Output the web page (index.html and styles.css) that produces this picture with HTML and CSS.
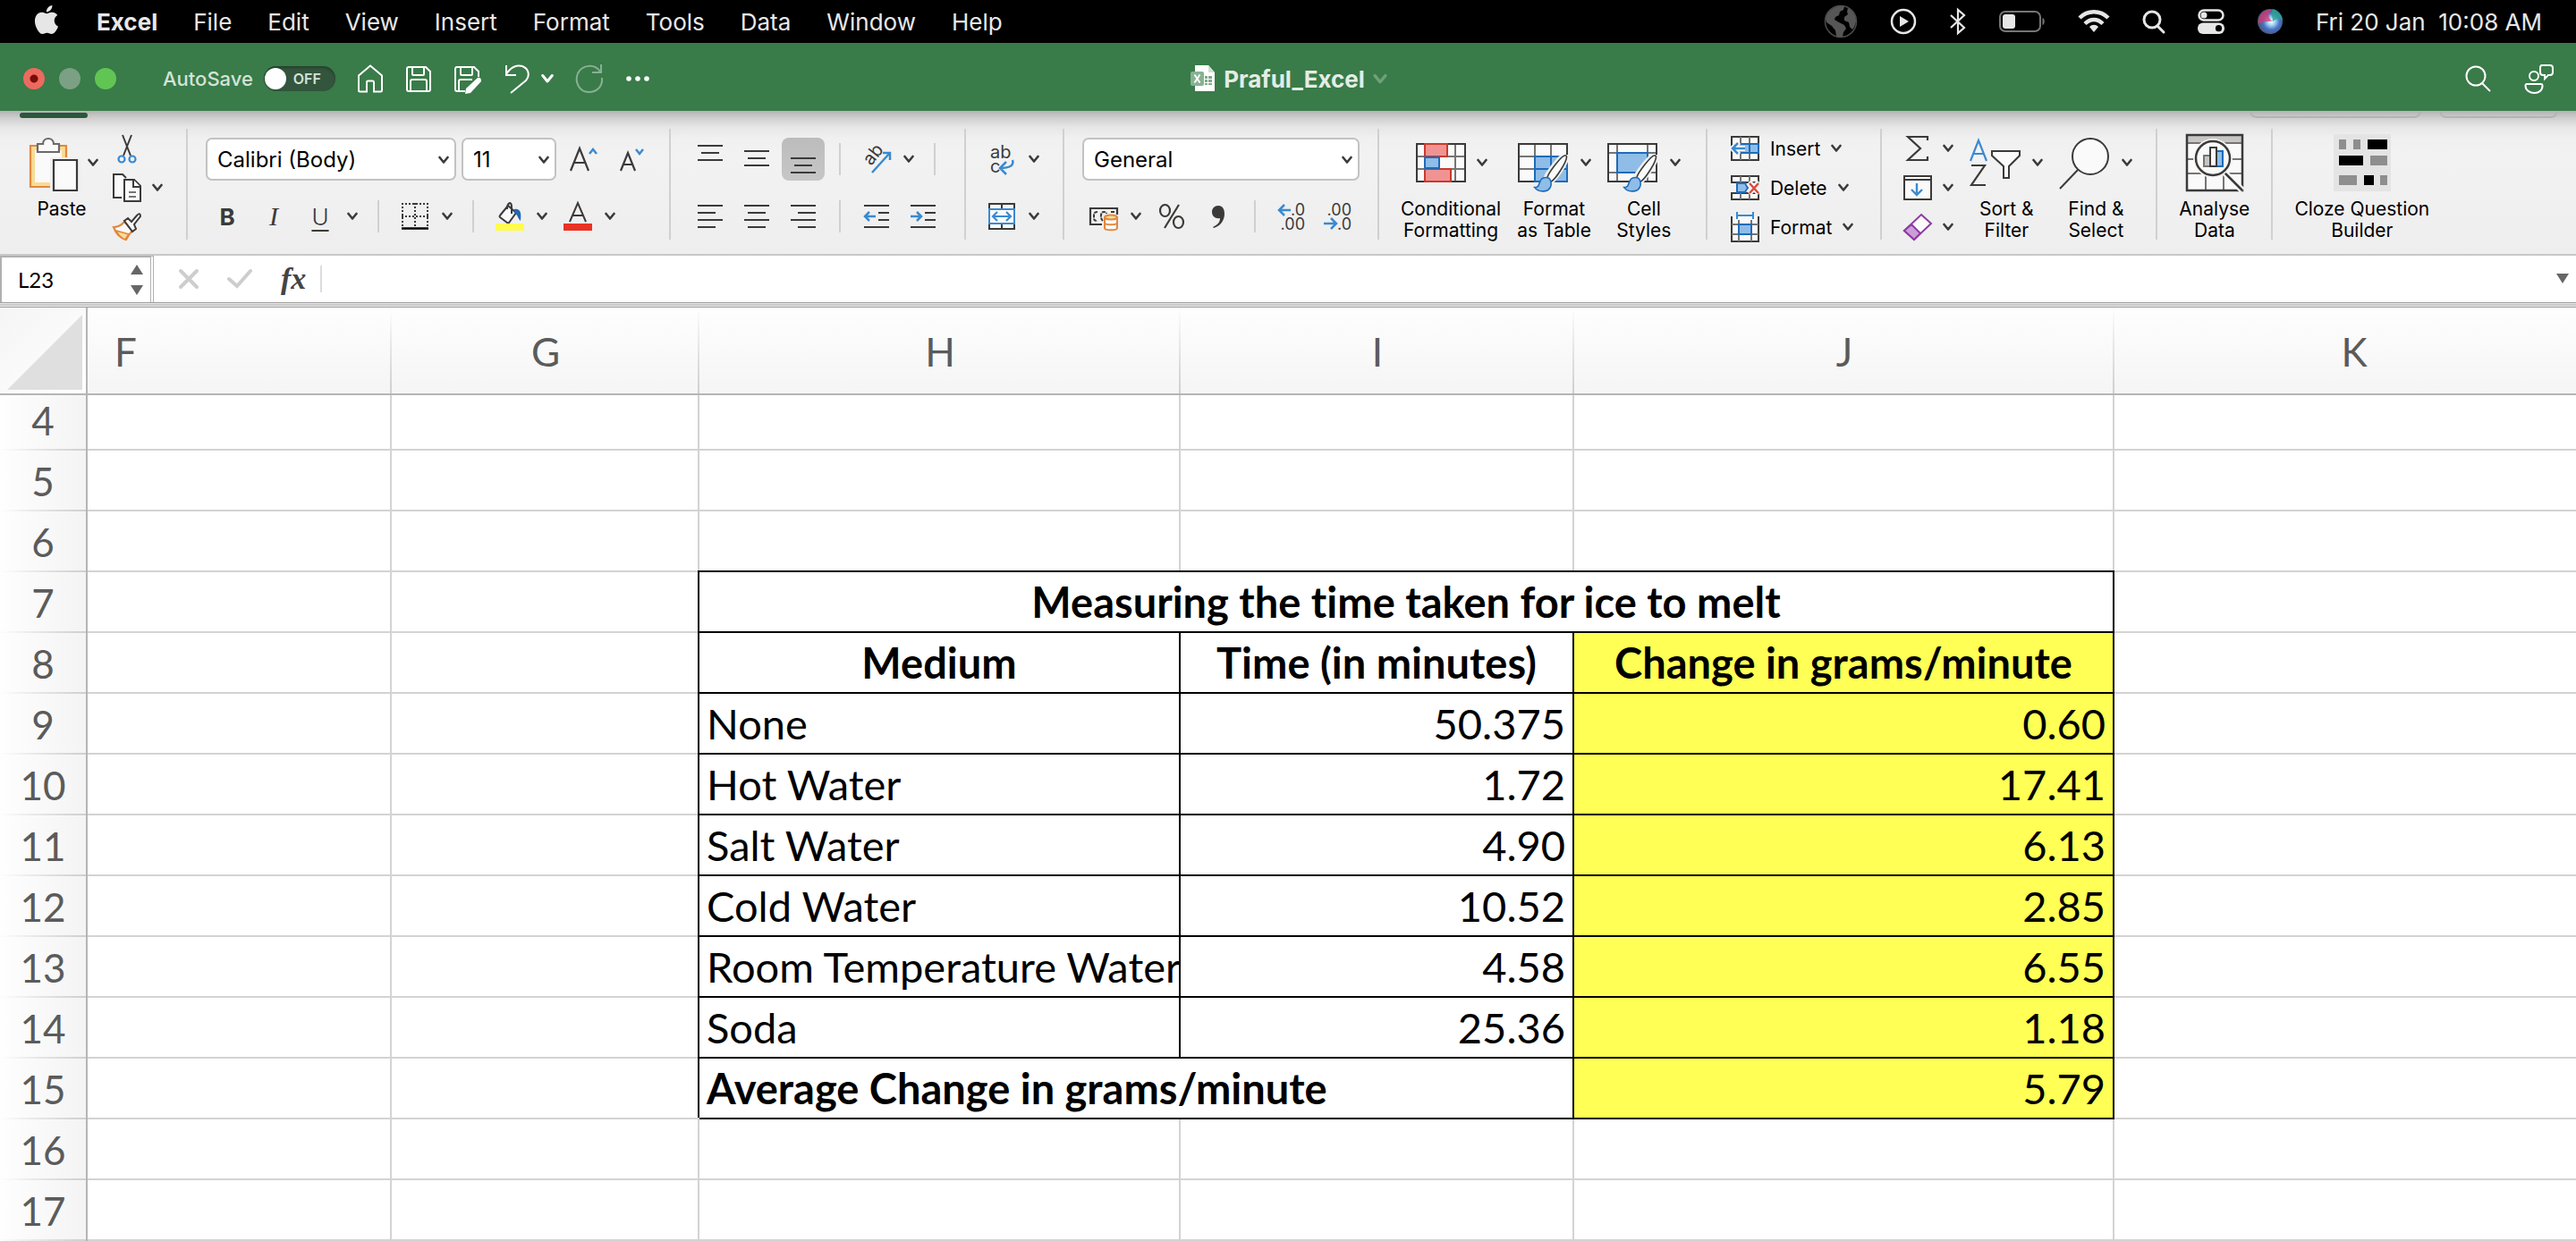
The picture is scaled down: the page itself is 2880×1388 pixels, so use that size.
FILE: index.html
```html
<!DOCTYPE html>
<html lang="en">
<head>
<meta charset="utf-8">
<meta name="viewport" content="width=device-width, initial-scale=1">
<title>Praful_Excel</title>
<link rel="stylesheet" href="styles.css">
</head>
<body>
<svg class="sprite" aria-hidden="true">
  <symbol id="chev" viewBox="0 0 12 10"><path d="M1.500 2 6 7.500 10.500 2" fill="none" stroke="currentColor" stroke-width="2.600" stroke-linecap="round" stroke-linejoin="round"/></symbol>
  <symbol id="brush" viewBox="0 0 48 54">
    <path d="M43 1C38 1 18 28 17 33l6 6C30 34 46 10 46 4c0-2-1-3-3-3z" fill="#fafafa" stroke="#f0f0f0" stroke-width="7"/>
    <path d="M44 1C39 1 20 26 19 32l5 6C31 34 46 10 46 3c0-1-1-2-2-2z" fill="#fafafa" stroke="#3b3a39" stroke-width="2"/>
    <path d="M17 32c-8 0-8 6-10 10-1 3-4 4-6 4 3 4 9 6 15 5 7-1 9-8 8-13-1-4-4-6-7-6z" fill="#8fbde8" stroke="#1e6bb8" stroke-width="2"/>
  </symbol>
</svg>

<header class="menubar">
  <nav class="menus" aria-label="Application menu">
    <a class="menu apple" href="#" aria-label="Apple menu"><svg width="32" height="32" viewBox="0 0 24 24" fill="#e6e6e6"><path d="M12.152 6.896c-.948 0-2.415-1.078-3.960-1.040-2.040.027-3.910 1.183-4.961 3.014-2.117 3.675-.546 9.103 1.519 12.090 1.013 1.454 2.208 3.090 3.792 3.039 1.520-.065 2.090-.987 3.935-.987 1.831 0 2.350.987 3.960.948 1.637-.026 2.676-1.480 3.676-2.948 1.156-1.688 1.636-3.325 1.662-3.415-.039-.013-3.182-1.221-3.220-4.857-.026-3.040 2.480-4.494 2.597-4.559-1.429-2.090-3.623-2.324-4.390-2.376-2-.156-3.675 1.090-4.610 1.090zM15.530 3.830c.843-1.012 1.400-2.427 1.245-3.830-1.207.052-2.662.805-3.532 1.818-.780.896-1.454 2.338-1.273 3.714 1.338.104 2.715-.688 3.559-1.701"/></svg></a>
    <a class="menu app" href="#">Excel</a>
    <a class="menu" href="#">File</a>
    <a class="menu" href="#">Edit</a>
    <a class="menu" href="#">View</a>
    <a class="menu" href="#">Insert</a>
    <a class="menu" href="#">Format</a>
    <a class="menu" href="#">Tools</a>
    <a class="menu" href="#">Data</a>
    <a class="menu" href="#">Window</a>
    <a class="menu" href="#">Help</a>
  </nav>
  <div class="status">
    <svg width="38" height="38" viewBox="0 0 38 38"><circle cx="19" cy="19" r="17.500" fill="#000" stroke="#4a4a4a" stroke-width="1.500"/><path d="M7 7c5-5 11-6 16-5l-1 4-4 2-1 4-4 2-1 3 5 3 6 3 2 4-3 4-1 5c-4 1-6 0-7-1l-1-6-4-5-6-4-1-4c1-4 2-6 5-9zM27 4c6 3 9 9 9 15-1 4-2 7-4 9l-3-3-1-5-5-2 0-4 4-3-1-3z" fill="#565656"/></svg>
    <svg width="30" height="30" viewBox="0 0 30 30"><circle cx="15" cy="15" r="13" fill="none" stroke="#e6e6e6" stroke-width="2.500"/><path d="M11 9v12l10-6z" fill="#e6e6e6"/></svg>
    <svg width="20" height="30" viewBox="0 0 20 30" fill="none" stroke="#e6e6e6" stroke-width="2.200"><path d="M2 8l15 14-7 6V2l7 6L2 22"/></svg>
    <svg width="52" height="26" viewBox="0 0 52 26"><rect x="1" y="2" width="45" height="22" rx="6" fill="none" stroke="#767676" stroke-width="2"/><path d="M48.500 9c3 1 3 7 0 8z" fill="#767676"/><rect x="4" y="5" width="14" height="16" rx="3" fill="#e6e6e6"/></svg>
    <svg width="36" height="28" viewBox="0 0 36 28" fill="none" stroke="#e6e6e6" stroke-width="4.500"><path d="M2 10C11 1 25 1 34 10M8 16.500c6-6 14-6 20 0"/><path d="M18 26l-5-6c3-3 7-3 10 0z" fill="#e6e6e6" stroke="none"/></svg>
    <svg width="26" height="28" viewBox="0 0 26 28" fill="none" stroke="#e6e6e6" stroke-width="3"><circle cx="11" cy="12" r="9"/><path d="M17 19l7 7" stroke-linecap="round"/></svg>
    <svg width="30" height="30" viewBox="0 0 30 30"><rect x="1.500" y="2.500" width="27" height="11" rx="5.500" fill="none" stroke="#e6e6e6" stroke-width="2.500"/><circle cx="7" cy="8" r="3.500" fill="#e6e6e6"/><rect x="0" y="16.500" width="30" height="12.500" rx="6" fill="#e6e6e6"/><circle cx="23.500" cy="22.700" r="3.600" fill="#000"/></svg>
    <svg width="30" height="30" viewBox="0 0 30 30"><defs><radialGradient id="siri" cx=".55" cy=".5" r=".55"><stop offset="0" stop-color="#fff"/><stop offset=".25" stop-color="#a9dcf5"/><stop offset=".6" stop-color="#4873c8"/><stop offset="1" stop-color="#49566f"/></radialGradient></defs><circle cx="15" cy="15" r="14" fill="url(#siri)"/><path d="M2 17C2 5 11 1 17 2c-5 3-5 9 1 13-7-1-11 2-16 2z" fill="#d8356e" opacity=".75"/><path d="M18 1c6 1 11 7 11 13-4-3-8-2-11 1 0-5-3-9 0-14z" fill="#2aa392" opacity=".8"/></svg>
    <time class="clock">Fri 20 Jan&nbsp; 10:08 AM</time>
  </div>
</header>

<div class="titlebar">
  <div class="title-left">
    <div class="lights">
      <button class="light close" aria-label="Close"></button>
      <button class="light min" aria-label="Minimise"></button>
      <button class="light max" aria-label="Zoom"></button>
    </div>
    <label class="autosave">AutoSave <span class="switch"><input type="checkbox"><span class="knob"></span><span class="off">OFF</span></span></label>
    <div class="quick">
      <button aria-label="Home"><svg width="30" height="32" viewBox="0 0 30 32"><path d="M2 12.500 15 1.500l13 11V29q0 1.500-1.500 1.500H19V20q0-1.500-1.500-1.500h-5Q11 18.500 11 20v10.500H3.500Q2 30.500 2 29z"/></svg></button>
      <button aria-label="Save"><svg width="30" height="32" viewBox="0 0 30 32"><path d="M4 3h19l5 5v20q0 2-2 2H4q-2 0-2-2V5q0-2 2-2zM8 3v8q0 1 1 1h11q1 0 1-1V3M6 30V19q0-2 2-2h14q2 0 2 2v11"/></svg></button>
      <button aria-label="Save as"><svg width="32" height="32" viewBox="0 0 32 32"><path d="M13 30H4q-2 0-2-2V5q0-2 2-2h19l5 5v6M8 3v8q0 1 1 1h11q1 0 1-1V3M6 30V19q0-2 2-2h13"/><path d="M27 15q4-1 4 4L19 32l-6 1 1-6z" fill="#fff" stroke="none"/></svg></button>
      <span class="undo"><button aria-label="Undo"><svg width="30" height="34" viewBox="0 0 30 34"><path d="M3 2v11h11M3 12C8 4 15 1 21 3c7 3 9 10 4 16L8 33"/></svg></button><button aria-label="Undo history"><svg width="14" height="12"><use href="#chev"/></svg></button></span>
      <button class="dim" aria-label="Redo"><svg width="32" height="34" viewBox="0 0 32 34"><path d="M29 1v9H19M28 9C22 0 8 1 3 11c-4 10 2 21 12 21 9 0 16-6 15-16"/></svg></button>
      <button aria-label="More"><svg width="28" height="8" viewBox="0 0 28 8"><g fill="#fff" stroke="none"><circle cx="4" cy="4" r="2.800"/><circle cx="14" cy="4" r="2.800"/><circle cx="24" cy="4" r="2.800"/></g></svg></button>
    </div>
  </div>
  <div class="doc">
    <svg width="28" height="30" viewBox="0 0 28 30"><path d="M5 0h15l7 8v21H5z" fill="#fff"/><path d="M20 0v8h7z" fill="#cfe0d3"/><g fill="#7fa98a"><path d="M16 12h3v3h-3zM20 12h4v3h-4zM16 16h3v3h-3zM20 16h4v3h-4zM16 20h3v2h-3zM20 20h4v2h-4z"/></g><rect x="0" y="7" width="15" height="16" rx="2" fill="#86b292"/><path d="M4.500 10.500l6 9M10.500 10.500l-6 9" stroke="#fff" stroke-width="2"/></svg>
    <h1>Praful_Excel</h1>
    <svg class="doc-chev" width="16" height="13"><use href="#chev"/></svg>
  </div>
  <div class="title-right">
    <button aria-label="Search"><svg width="30" height="30" viewBox="0 0 30 30"><circle cx="12" cy="12" r="10.500"/><path d="M19 20l9 9"/></svg></button>
    <button aria-label="Share"><svg width="34" height="34" viewBox="0 0 34 34"><circle cx="11" cy="14" r="5"/><path d="M3 23h16q1.500 0 1.500 2c0 5-4 8-9 8s-10-3-10-8q0-2 1.500-2zM20 2h9q3 0 3 3v5q0 3-3 3h-2l-4 4v-4h-2q-3 0-3-3V5q0-3 2-3z"/></svg></button>
  </div>
</div>

<section class="ribbon" aria-label="Home ribbon">
  <div class="tabs"><span class="tab-active"></span><span class="tab-pill wide"></span><span class="tab-pill"></span></div>
  <div class="groups">
    <div class="group clip">
      <button class="big"><span class="pic"><svg width="64" height="64" viewBox="0 0 64 64"><path d="M6 13h40v46H6z" fill="#f8dc95" stroke="#e2883e" stroke-width="2.200"/><path d="M11 18h30v36H11z" fill="#fafafa"/><path d="M14 20v-9h6c0-8 12-8 12 0h6v9z" fill="#fafafa" stroke="#6a6a69" stroke-width="2.200"/><path d="M28 26h35v40H28z" fill="#f0f0f0"/><path d="M32 29h26v34H32z" fill="#fafafa" stroke="#3b3a39" stroke-width="2.200"/></svg><svg class="chev"><use href="#chev"/></svg></span><span>Paste</span></button>
      <div class="stack">
        <button class="mini" aria-label="Cut"><svg width="32" height="32" viewBox="0 0 32 32" fill="none"><path d="M11 1l9 23M21 1l-9 23" stroke="#3b3a39" stroke-width="2"/><circle cx="10" cy="28" r="3.500" stroke="#3a8ad0" stroke-width="2.200"/><circle cx="22" cy="28" r="3.500" stroke="#3a8ad0" stroke-width="2.200"/></svg></button>
        <button class="mini" aria-label="Copy"><svg width="32" height="32" viewBox="0 0 32 32" fill="#fafafa" stroke="#3b3a39" stroke-width="2"><path d="M10 27H1V1h10l4 4" fill="#fafafa"/><path d="M13 7h11l7 7v17H13z"/><path d="M23 7v8h8"/><path d="M18 21h8M18 26h8" stroke="#767573"/></svg><svg class="chev"><use href="#chev"/></svg></button>
        <button class="mini" aria-label="Format painter"><svg width="32" height="32" viewBox="0 0 32 32"><path d="M1 16q7 0 12-6l9 10q-4 4-7 10Q5 27 1 16z" fill="#fafafa" stroke="#e2883e" stroke-width="2.200"/><path d="M4 20l14 4-4 6Q7 27 4 20z" fill="#f8dc95" stroke="#e2883e" stroke-width="1.800"/><path d="M13 9l4-3 4 4 6-7q4-4 4 1l-7 9 2 5-4 3z" fill="#fafafa" stroke="#3b3a39" stroke-width="2"/></svg></button>
      </div>
    </div>

    <div class="group rows font">
      <div class="row top">
        <span class="drop face"><select aria-label="Font"><option>Calibri (Body)</option></select><svg class="chev"><use href="#chev"/></svg></span>
        <span class="drop size"><select aria-label="Font size"><option>11</option></select><svg class="chev"><use href="#chev"/></svg></span>
        <button class="tool" aria-label="Increase font size"><svg width="32" height="32" viewBox="0 0 32 32" fill="none"><path d="M2 29 12 4l10 25M6 20h12" stroke="#3b3a39" stroke-width="2.200"/><path d="M23 10l4-5 4 5" stroke="#3a8ad0" stroke-width="2.500"/></svg></button>
        <button class="tool" aria-label="Decrease font size"><svg width="32" height="32" viewBox="0 0 32 32" fill="none"><path d="M4 29 12 9l8 20M7 22h10" stroke="#3b3a39" stroke-width="2.200"/><path d="M21 5l4 5 4-5" stroke="#3a8ad0" stroke-width="2.500"/></svg></button>
      </div>
      <div class="row">
        <button class="tool bold">B</button>
        <button class="tool ital">I</button>
        <span class="split"><button class="tool under">U</button><button class="caret" aria-label="Underline styles"><svg class="chev"><use href="#chev"/></svg></button></span>
        <span class="sep"></span>
        <span class="split"><button class="tool" aria-label="Borders"><svg width="30" height="30" viewBox="0 0 30 30" fill="none" stroke="#3b3a39" stroke-width="2"><path d="M0 1h30M1 0v26M15 0v26M29 0v26M0 15h30" stroke-dasharray="2 2"/><path d="M0 28.500h30" stroke="#000" stroke-width="2.500"/></svg></button><button class="caret" aria-label="Border styles"><svg class="chev"><use href="#chev"/></svg></button></span>
        <span class="sep"></span>
        <span class="split"><button class="tool" aria-label="Fill colour"><svg width="32" height="34" viewBox="0 0 32 34"><path d="M14 5 5 16q-1 1 0 2l8 6q1 1 2 0l8-11z" fill="#fafafa" stroke="#3b3a39" stroke-width="2"/><path d="M13 9c0-8 5-9 5-3v8" fill="none" stroke="#3b3a39" stroke-width="2"/><path d="M21 9c7-1 8 4 7 13-3-2-3-7-7-9z" fill="#2268b5"/><path d="M0 25h32v8H0z" fill="#fffb4f"/></svg></button><button class="caret" aria-label="Fill colours"><svg class="chev"><use href="#chev"/></svg></button></span>
        <span class="split"><button class="tool" aria-label="Font colour"><svg width="32" height="34" viewBox="0 0 32 34"><path d="M7 23 16 2l9 21M10.500 16h11" fill="none" stroke="#3b3a39" stroke-width="2"/><path d="M0 25h32v8H0z" fill="#ea3323"/></svg></button><button class="caret" aria-label="Font colours"><svg class="chev"><use href="#chev"/></svg></button></span>
      </div>
    </div>

    <div class="group rows align">
      <div class="row top">
        <button class="tool" aria-label="Top align"><svg class="ln" width="28" height="32" viewBox="0 0 28 32"><path d="M0 1h28M4 9h20M0 17h28"/></svg></button>
        <button class="tool" aria-label="Middle align"><svg class="ln" width="28" height="32" viewBox="0 0 28 32"><path d="M0 7h28M4 15h20M0 23h28"/></svg></button>
        <button class="tool on" aria-label="Bottom align"><svg class="ln" width="28" height="32" viewBox="0 0 28 32"><path d="M0 15h28M4 23h20M0 31h28"/></svg></button>
        <span class="sep"></span>
        <span class="split"><button class="tool" aria-label="Orientation"><svg width="36" height="32" viewBox="0 0 36 32"><text x="0" y="0" font-family="Inter" font-size="20" fill="#3b3a39" transform="translate(12 24) rotate(-52)">ab</text><path d="M13 31 32 10M25 9h8v8" fill="none" stroke="#3a8ad0" stroke-width="2.500"/></svg></button><button class="caret" aria-label="Orientations"><svg class="chev"><use href="#chev"/></svg></button></span>
        <span class="sep"></span>
      </div>
      <div class="row">
        <button class="tool" aria-label="Align left"><svg class="ln" width="28" height="28" viewBox="0 0 28 28"><path d="M0 2h28M0 10h20M0 18h28M0 26h20"/></svg></button>
        <button class="tool" aria-label="Centre"><svg class="ln" width="28" height="28" viewBox="0 0 28 28"><path d="M0 2h28M4 10h20M0 18h28M4 26h20"/></svg></button>
        <button class="tool" aria-label="Align right"><svg class="ln" width="28" height="28" viewBox="0 0 28 28"><path d="M0 2h28M8 10h20M0 18h28M8 26h20"/></svg></button>
        <span class="sep"></span>
        <button class="tool" aria-label="Decrease indent"><svg class="ln" width="28" height="28" viewBox="0 0 28 28"><path d="M0 2h28M16 10h12M16 18h12M0 26h28"/><path class="blue" d="M13 14H2M6 9l-5 5 5 5"/></svg></button>
        <button class="tool" aria-label="Increase indent"><svg class="ln" width="28" height="28" viewBox="0 0 28 28"><path d="M0 2h28M16 10h12M16 18h12M0 26h28"/><path class="blue" d="M0 14h11M7 9l5 5-5 5"/></svg></button>
      </div>
    </div>

    <div class="group rows wrap">
      <div class="row top">
        <span class="split"><button class="tool" aria-label="Wrap text"><svg width="30" height="34" viewBox="0 0 30 34" font-family="Inter" font-size="20" fill="#3b3a39"><text x="2" y="16">ab</text><text x="2" y="32">c</text><path d="M27 18c2 6-3 9-14 9M20 20l-7 7 7 7" fill="none" stroke="#3a8ad0" stroke-width="2.500"/></svg></button><button class="caret" aria-label="Wrap options"><svg class="chev"><use href="#chev"/></svg></button></span>
      </div>
      <div class="row">
        <span class="split"><button class="tool" aria-label="Merge"><svg width="30" height="30" viewBox="0 0 30 30" fill="#fafafa" stroke="#3b3a39" stroke-width="2"><path d="M1 1h28v28H1zM15 1v28"/><path d="M1 7h28v16H1z" stroke="#3a8ad0"/><path d="M6 15h18M10 10l-5 5 5 5M20 10l5 5-5 5" fill="none" stroke="#3a8ad0" stroke-width="2.200"/></svg></button><button class="caret" aria-label="Merge options"><svg class="chev"><use href="#chev"/></svg></button></span>
      </div>
    </div>

    <div class="group rows number">
      <div class="row top">
        <span class="drop format"><select aria-label="Number format"><option>General</option></select><svg class="chev"><use href="#chev"/></svg></span>
      </div>
      <div class="row">
        <span class="split"><button class="tool" aria-label="Accounting format"><svg width="32" height="32" viewBox="0 0 32 32" fill="none"><path d="M14 25H1V7h30v7" stroke="#3b3a39" stroke-width="2.200"/><path d="M9 11q-4 0-4 3v4q0 3 4 3M24 11h3v2M15 21c-3-2-3-10 1-10q3 0 3 2" stroke="#3b3a39" stroke-width="2" stroke-dasharray="4 1"/><path d="M17 17v12c0 3 14 3 14 0V17" fill="#fafafa" stroke="#e2883e" stroke-width="2"/><ellipse cx="24" cy="17" rx="7" ry="2.500" fill="#f8dc95" stroke="#e2883e" stroke-width="2"/><path d="M17 23c0 3 14 3 14 0" stroke="#e2883e" stroke-width="2"/></svg></button><button class="caret" aria-label="Accounting formats"><svg class="chev"><use href="#chev"/></svg></button></span>
        <button class="tool" aria-label="Percent style"><svg width="30" height="30" viewBox="0 0 30 30" fill="none" stroke="#3b3a39" stroke-width="2.200"><ellipse cx="7.500" cy="8.500" rx="5.500" ry="6.500"/><ellipse cx="22.500" cy="21.500" rx="5.500" ry="6.500"/><path d="M23 2 7 28"/></svg></button>
        <button class="tool" aria-label="Comma style"><svg width="16" height="26" viewBox="0 0 16 26"><path d="M2 25c6-3 8-6 8-10-5 1-9-2-9-7 0-4 3-7 7-7 5 0 7 4 7 9 0 8-5 14-12 16z" fill="#3b3a39"/></svg></button>
        <span class="sep"></span>
        <button class="tool" aria-label="Increase decimals"><svg width="32" height="34" viewBox="0 0 32 34" font-family="Inter" font-size="18" fill="#3b3a39"><text x="31" y="16" text-anchor="end">.0</text><text x="31" y="32" text-anchor="end">.00</text><path d="M15 10H2M8 4L2 10l6 6" fill="none" stroke="#3a8ad0" stroke-width="2.500"/></svg></button>
        <button class="tool" aria-label="Decrease decimals"><svg width="32" height="34" viewBox="0 0 32 34" font-family="Inter" font-size="18" fill="#3b3a39"><text x="31" y="16" text-anchor="end">.00</text><text x="31" y="32" text-anchor="end">.0</text><path d="M0 25h14M8 19l6 6-6 6" fill="none" stroke="#3a8ad0" stroke-width="2.500"/></svg></button>
      </div>
    </div>

    <div class="group styles">
      <button class="big"><span class="pic"><svg width="64" height="64" viewBox="0 0 64 64"><path d="M3 11h54v42H3z" fill="#fafafa"/><path d="M12 11v42M46 11v42M3 25h54M3 39h54" stroke="#767573" stroke-width="2"/><path d="M3 11h54v42H3z" fill="none" stroke="#3b3a39" stroke-width="2"/><path d="M12 11h25v14H12zM12 39h29v14H12z" fill="#f19393" stroke="#ca3a2c" stroke-width="2"/><path d="M12 26h16v12H12z" fill="#8fbde8" stroke="#1e6bb8" stroke-width="2"/></svg><svg class="chev"><use href="#chev"/></svg></span><span>Conditional<br>Formatting</span></button>
      <button class="big"><span class="pic"><svg width="64" height="64" viewBox="0 0 64 64"><path d="M1 11h54v42H1z" fill="#fafafa"/><path d="M19 25h36v28H19z" fill="#8fbde8"/><path d="M19 11v14M37 11v14M1 25h18M1 39h18" stroke="#767573" stroke-width="2"/><path d="M1 11h54v42H1z" fill="none" stroke="#3b3a39" stroke-width="2"/><path d="M19 25h36v28H19zM37 25v28M19 39h36" fill="none" stroke="#1e6bb8" stroke-width="2"/><use href="#brush" x="13" y="23" width="48" height="43"/></svg><svg class="chev"><use href="#chev"/></svg></span><span>Format<br>as Table</span></button>
      <button class="big"><span class="pic"><svg width="64" height="64" viewBox="0 0 64 64"><path d="M1 11h54v42H1z" fill="#fafafa"/><path d="M11 11v42M45 11v42M1 21h54M1 43h54" stroke="#767573" stroke-width="2"/><path d="M1 11h54v42H1z" fill="none" stroke="#3b3a39" stroke-width="2"/><path d="M11 21h34v22H11z" fill="#8fbde8" stroke="#1e6bb8" stroke-width="2"/><use href="#brush" x="13" y="23" width="48" height="43"/></svg><svg class="chev"><use href="#chev"/></svg></span><span>Cell<br>Styles</span></button>
    </div>

    <div class="group cells">
      <div class="stack">
        <button class="mini"><svg width="32" height="32" viewBox="0 0 32 32" fill="#fafafa" stroke="#3b3a39" stroke-width="2"><path d="M1 3h30v26H1z"/><path d="M11 3v26M21 3v26" stroke="#767573"/><path d="M8 11h23v10H8z" fill="#8fbde8" stroke="#1e6bb8"/><path d="M21 11v10" stroke="#1e6bb8"/><path d="M16 16H2M9 9l-7 7 7 7" fill="none" stroke="#fafafa" stroke-width="6"/><path d="M16 16H2M8 10l-6 6 6 6" fill="none" stroke="#3a8ad0" stroke-width="2.500"/></svg>Insert<svg class="chev"><use href="#chev"/></svg></button>
        <button class="mini"><svg width="32" height="32" viewBox="0 0 32 32" fill="#fafafa" stroke="#3b3a39" stroke-width="2"><path d="M1 10V3h30v7zM1 29v-7h30v7z"/><path d="M11 3v7M21 3v7M11 22v7M21 22v7" stroke="#767573"/><path d="M7 11h9l3 5-3 5H7z" fill="#8fbde8" stroke="#1e6bb8"/><path d="M20 10l12 12M32 10L20 22" stroke="#f4f4f4" stroke-width="7"/><path d="M21 11l10 11M31 11L21 22" stroke="#e0453a" stroke-width="2.400"/></svg>Delete<svg class="chev"><use href="#chev"/></svg></button>
        <button class="mini"><svg width="32" height="34" viewBox="0 0 32 34" fill="#fafafa" stroke="#3b3a39" stroke-width="2"><path d="M1 5v28h30V5"/><path d="M9 9v24M23 9v24M1 14h30M1 25h30" stroke="#767573"/><path d="M9 14h14v11H9z" fill="#8fbde8" stroke="#1e6bb8"/><path d="M7 4h18M7 0v8M25 0v8" stroke="#3a8ad0"/></svg>Format<svg class="chev"><use href="#chev"/></svg></button>
      </div>
    </div>

    <div class="group editing">
      <div class="stack">
        <button class="mini" aria-label="AutoSum"><svg width="32" height="32" viewBox="0 0 32 32" fill="none" stroke="#3b3a39" stroke-width="2.200"><path d="M27 7V3H5l14 13L5 29h22v-4"/></svg><svg class="chev"><use href="#chev"/></svg></button>
        <button class="mini" aria-label="Fill"><svg width="32" height="32" viewBox="0 0 32 32" fill="#fafafa" stroke="#3b3a39" stroke-width="2"><path d="M1 3h30v26H1zM1 7h30"/><path d="M15 11v13M9 18l6 6 6-6" fill="none" stroke="#3a8ad0" stroke-width="2.400"/></svg><svg class="chev"><use href="#chev"/></svg></button>
        <button class="mini" aria-label="Clear"><svg width="32" height="32" viewBox="0 0 32 32"><path d="M20 2l11 10-19 18L1 20z" fill="#fafafa" stroke="#8d3ba2" stroke-width="2"/><path d="M9 13l10 10-7 7L1 20z" fill="#cd9ddb" stroke="#8d3ba2" stroke-width="2"/></svg><svg class="chev"><use href="#chev"/></svg></button>
      </div>
      <button class="big"><span class="pic"><svg width="64" height="64" viewBox="0 0 64 64" fill="none" stroke-width="2"><path d="M1 30 10 7l9 23M4 22h12" stroke="#3a8ad0" stroke-width="2.200"/><path d="M2 35h15L2 57h16" stroke="#3b3a39" stroke-width="2.200"/><path d="M25 19h31v5L44 36v13h-6V36L25 24z" fill="#fafafa" stroke="#3b3a39"/></svg><svg class="chev"><use href="#chev"/></svg></span><span>Sort &amp;<br>Filter</span></button>
      <button class="big"><span class="pic"><svg width="64" height="64" viewBox="0 0 64 64"><path d="M1 61 21 40" stroke="#3b3a39" stroke-width="2"/><circle cx="35" cy="25" r="20" fill="#fafafa" stroke="#3b3a39" stroke-width="2"/></svg><svg class="chev"><use href="#chev"/></svg></span><span>Find &amp;<br>Select</span></button>
    </div>

    <div class="group">
      <button class="big"><span class="pic"><svg width="64" height="64" viewBox="0 0 64 64"><path d="M1 1h62v62H1z" fill="#fafafa"/><path d="M1 1h62v9H1z" fill="#c8c6c4"/><path d="M1 10h62M1 28h62M1 44h62M22 44v19M42 44v19" stroke="#767573" stroke-width="2"/><path d="M1 1h62v62H1z" fill="none" stroke="#3b3a39" stroke-width="2.500"/><path d="M43 43l20 20" stroke="#fafafa" stroke-width="7"/><path d="M43 43l20 20" stroke="#3b3a39" stroke-width="2.500"/><circle cx="30" cy="27" r="22" fill="#f4f4f4"/><circle cx="30" cy="27" r="19" fill="#fafafa" stroke="#3b3a39" stroke-width="2.500"/><path d="M20 24h7v12h-7z" fill="#c8c6c4" stroke="#767573" stroke-width="2"/><path d="M34 19h7v17h-7z" fill="#8fbde8" stroke="#1e6bb8" stroke-width="2"/><path d="M27 15h7v21h-7z" fill="#fafafa" stroke="#3b3a39" stroke-width="2"/></svg></span><span>Analyse<br>Data</span></button>
    </div>

    <div class="group last">
      <button class="big"><span class="pic"><svg width="64" height="64" viewBox="0 0 64 64"><path d="M0 0h64v64H0z" fill="#e4e4e4"/><path d="M6 6h8v11H6zM22 6h8v11h-8zM41 24h19v11H41zM6 46h20v11H6zM52 46h8v11h-8z" fill="#8e8e8e"/><path d="M38 6h22v11H38zM6 24h27v11H6zM34 46h11v11H34z" fill="#000"/></svg></span><span>Cloze Question<br>Builder</span></button>
    </div>
  </div>
</section>

<form class="formula">
  <div class="namebox"><input class="cellref" type="text" value="L23" aria-label="Name box"><svg width="14" height="36" viewBox="0 0 14 36" fill="#666"><path d="M7 1l7 11H0zM7 35l7-11H0z"/></svg></div>
  <button type="button" aria-label="Cancel"><svg width="22" height="22" viewBox="0 0 22 22"><path d="M2 2l18 18M20 2L2 20" stroke="#cdcdcd" stroke-width="4" stroke-linecap="round"/></svg></button>
  <button type="button" aria-label="Enter"><svg width="28" height="22" viewBox="0 0 28 22"><path d="M2 11l9 8L26 2" fill="none" stroke="#cdcdcd" stroke-width="4" stroke-linecap="round"/></svg></button>
  <button type="button" class="fx">fx</button>
  <input class="entry" type="text" aria-label="Formula">
  <button type="button" class="expand" aria-label="Expand formula bar"><svg width="14" height="12" viewBox="0 0 14 12"><path d="M0 0h14L7 11z" fill="#666"/></svg></button>
</form>
<div class="rule"></div>

<main>
<table class="sheet">
  <colgroup><col class="c-head"><col class="c-f"><col class="c-g"><col class="c-h"><col class="c-i"><col class="c-j"><col></colgroup>
  <thead><tr><th class="corner" aria-label="Select all"><svg width="84" height="84" viewBox="0 0 84 84"><path d="M84 0v84H0z" fill="#dfdfdf"/></svg></th><th class="from-left">F</th><th>G</th><th>H</th><th>I</th><th>J</th><th class="cut">K</th></tr></thead>
  <tbody>
    <tr class="short"><th>4</th><td></td><td></td><td></td><td></td><td></td><td></td></tr>
    <tr><th>5</th><td></td><td></td><td></td><td></td><td></td><td></td></tr>
    <tr><th>6</th><td></td><td></td><td></td><td></td><td></td><td></td></tr>
    <tr><th>7</th><td></td><td></td><td class="box mid" colspan="3">Measuring the time taken for ice to melt</td><td></td></tr>
    <tr><th>8</th><td></td><td></td><td class="box mid">Medium</td><td class="box mid">Time (in minutes)</td><td class="box mid hl">Change in grams/minute</td><td></td></tr>
    <tr><th>9</th><td></td><td></td><td class="box">None</td><td class="box num">50.375</td><td class="box num hl">0.60</td><td></td></tr>
    <tr><th>10</th><td></td><td></td><td class="box">Hot Water</td><td class="box num">1.72</td><td class="box num hl">17.41</td><td></td></tr>
    <tr><th>11</th><td></td><td></td><td class="box">Salt Water</td><td class="box num">4.90</td><td class="box num hl">6.13</td><td></td></tr>
    <tr><th>12</th><td></td><td></td><td class="box">Cold Water</td><td class="box num">10.52</td><td class="box num hl">2.85</td><td></td></tr>
    <tr><th>13</th><td></td><td></td><td class="box">Room Temperature Water</td><td class="box num">4.58</td><td class="box num hl">6.55</td><td></td></tr>
    <tr><th>14</th><td></td><td></td><td class="box">Soda</td><td class="box num">25.36</td><td class="box num hl">1.18</td><td></td></tr>
    <tr><th>15</th><td></td><td></td><td class="box total" colspan="2">Average Change in grams/minute</td><td class="box num hl">5.79</td><td></td></tr>
    <tr><th>16</th><td></td><td></td><td></td><td></td><td></td><td></td></tr>
    <tr><th>17</th><td></td><td></td><td></td><td></td><td></td><td></td></tr>
  </tbody>
</table>
</main>
</body>
</html>
```
FILE: styles.css
```css
* { box-sizing: border-box; }

body {
  margin: 0;
  background: #fff;
  color: #000;
  font-family: Inter, "Liberation Sans", sans-serif;
  font-size: 21px;
}

button {
  margin: 0;
  padding: 0;
  border: 0;
  background: none;
  color: inherit;
  font: inherit;
}

svg { display: block; flex: none; overflow: visible; }
.sprite { position: absolute; width: 0; height: 0; overflow: hidden; }
.chev { width: 12px; height: 10px; color: #3b3a39; }

/* System menu bar */
.menubar {
  display: flex;
  justify-content: space-between;
  align-items: center;
  height: 48px;
  padding: 0 38px 0 36px;
  background: #000;
  color: #e8e8e8;
  font-size: 26px;
}
.menus { display: flex; align-items: center; gap: 40px; }
.menu { color: inherit; text-decoration: none; }
.menu.app { font-weight: 700; }
.apple { margin-bottom: 4px; }
.status { display: flex; align-items: center; gap: 36px; }
.clock { white-space: nowrap; }

/* Window title bar */
.titlebar {
  display: grid;
  grid-template-columns: 1fr auto 1fr;
  align-items: center;
  height: 76px;
  padding: 4px 24px 0 26px;
  background: #397b49;
  color: #fff;
}
.title-left, .quick, .undo, .lights, .doc, .title-right, .autosave { display: flex; align-items: center; }
.titlebar svg { fill: none; stroke: #fff; stroke-width: 2; }
.lights { gap: 16px; }
.light { width: 24px; height: 24px; border-radius: 50%; }
.close { background: radial-gradient(circle, #7a0d09 0 4px, #ed6a5e 5px); }
.min { background: #7ba083; }
.max { background: #61c554; }
.autosave { gap: 12px; margin-left: 52px; color: #d3e3d7; font-size: 22px; font-weight: 500; }
.switch {
  position: relative;
  display: flex;
  align-items: center;
  justify-content: flex-end;
  width: 80px;
  height: 28px;
  padding-right: 16px;
  border-radius: 14px;
  background: #33553d;
  box-shadow: inset 0 2px 3px #23402c;
}
.switch input { position: absolute; inset: 0; margin: 0; opacity: 0; }
.knob { position: absolute; left: 1px; top: 2px; width: 24px; height: 24px; border-radius: 50%; background: #fff; }
.off { font-size: 16px; font-weight: 600; }
.quick { gap: 24px; margin-left: 24px; }
.undo { gap: 12px; }
.dim { opacity: .4; }
.doc { gap: 9px; }
.titlebar .doc > svg:first-child { stroke: none; }
.doc h1 { margin: 0; color: #e3ede5; font-size: 26px; font-weight: 700; }
.doc-chev { color: #6fa07b; }
.title-right { justify-content: flex-end; gap: 36px; }

/* Ribbon */
.ribbon {
  height: 162px;
  border-bottom: 2px solid #c8c8c8;
  background: linear-gradient(#b2b2b2, #cfcfcf 8px, #e6e6e6 18px, #f0f0f0 30px, #f2f2f2 50px, #eeeeee);
}
.tabs { display: flex; gap: 20px; height: 20px; padding: 0 20px 0 22px; }
.tab-active { width: 76px; height: 6px; margin: 2px auto 0 0; border-radius: 3px; background: #2b573a; }
.tab-pill { width: 133px; height: 8px; border: 2px solid #b4b4b4; border-top: 0; border-radius: 0 0 8px 8px; }
.tab-pill.wide { width: 192px; }
.groups { display: flex; }
.group {
  display: flex;
  flex: none;
  align-items: flex-start;
  gap: 18px;
  height: 124px;
  padding: 6px 24px 0;
  border-right: 2px solid #d0d0d0;
}
.group.clip { gap: 16px; padding-left: 28px; padding-right: 26px; }
.group.styles { padding-right: 28px; }
.group.cells { padding-left: 26px; padding-right: 30px; }
.group.editing { padding-right: 26px; }
.group.last { border-right: 0; }
.group.rows { flex-direction: column; gap: 22px; padding: 10px 20px 0; }
.group.wrap { padding-left: 16px; }
.group.font { padding-right: 18px; }
.row { display: flex; align-items: center; gap: 4px; height: 36px; }
.row.top { height: 48px; }
.font .top { gap: 6px; }
.tool {
  display: flex;
  align-items: center;
  justify-content: center;
  width: 48px;
  height: 48px;
  border-radius: 8px;
  color: #3b3a39;
  font-size: 26px;
}
.tool.on { background: linear-gradient(#bcbcbc, #c6c6c6); }
.bold { font-weight: 700; }
.ital { font-family: "Liberation Serif", serif; font-style: italic; font-size: 30px; }
.under { font-weight: 300; text-decoration: underline; text-underline-offset: 5px; text-decoration-thickness: 2px; }
.ln { fill: none; stroke: #3b3a39; stroke-width: 2; }
.ln .blue { stroke: #3a8ad0; stroke-width: 2.5; }
.split { display: flex; align-items: center; gap: 6px; padding-right: 6px; }
.sep { width: 2px; height: 36px; margin: 0 12px; background: #d0d0d0; }
.drop { position: relative; display: block; }
.drop select {
  appearance: none;
  width: 100%;
  height: 48px;
  padding: 0 30px 0 11px;
  border: 2px solid #c2c2c2;
  border-radius: 7px;
  background: #fff;
  color: #000;
  font: 24px Inter, "Liberation Sans", sans-serif;
}
.drop .chev { position: absolute; right: 8px; top: 20px; pointer-events: none; }
.face { width: 280px; }
.size { width: 106px; }
.format { width: 310px; }
.big {
  display: flex;
  flex-direction: column;
  align-items: center;
  gap: 8px;
  line-height: 24px;
  white-space: nowrap;
}
.pic { display: flex; align-items: center; gap: 6px; }
.stack { display: flex; flex-direction: column; align-items: flex-start; gap: 12px; }
.mini { display: flex; align-items: center; gap: 12px; height: 32px; }

/* Formula bar */
.formula { display: flex; align-items: center; height: 52px; }
.namebox {
  display: flex;
  align-items: center;
  align-self: stretch;
  width: 172px;
  padding: 0 8px 0 0;
  border: 2px solid #b0b0b0;
  border-right: 4px double #b0b0b0;
  border-bottom: 0;
}
.cellref { flex: 1; min-width: 0; padding: 0 0 2px 18px; border: 0; background: none; font: 24px Lato, sans-serif; }
.formula button { margin-left: 32px; }
.formula button:first-of-type { margin-left: 28px; }
.formula .fx { color: #444; font: italic 700 34px/40px "Liberation Serif", serif; }
.entry { flex: 1; height: 30px; margin-left: 16px; border: 0; border-left: 2px solid #dcdcdc; font: 24px Lato, sans-serif; }
.formula .expand { margin: 0 8px; }
.rule { height: 6px; border: solid #9d9d9d; border-width: 1px 0; background: linear-gradient(#e9e9e9 1px, #c9c9c9 1px 3px, #ececec 3px); }

/* Worksheet */
.sheet {
  width: 100%;
  border-collapse: separate;
  border-spacing: 0;
  table-layout: fixed;
  font-family: Lato, sans-serif;
  font-variant-ligatures: none;
  font-size: 47px;
  line-height: 52px;
}
.c-head { width: 98px; }
.c-f { width: 340px; }
.c-g { width: 344px; }
.c-h { width: 538px; }
.c-i { width: 440px; }
.c-j { width: 604px; }
.sheet th { padding: 0; color: #5b5b5b; font-size: 44px; font-weight: 400; text-align: center; }
.sheet thead th {
  height: 98px;
  padding-top: 2px;
  border-bottom: 2px solid #b5b5b5;
  background:
    linear-gradient(transparent, #cfcfcf) right / 2px 100% no-repeat,
    linear-gradient(#fefefe, #f5f5f5);
}
.sheet thead .corner { border-right: 2px solid #b5b5b5; background: linear-gradient(135deg, #f5f5f5, #fff); }
.corner svg { margin: 2px 0 0 8px; }
.sheet thead .from-left { padding-left: 30px; text-align: left; }
.sheet thead .cut { padding-left: 20px; background: linear-gradient(#fefefe, #f5f5f5); }
.sheet tbody th {
  border-right: 2px solid #b5b5b5;
  background:
    linear-gradient(90deg, transparent, #cfcfcf) bottom / 100% 2px no-repeat,
    linear-gradient(90deg, #fefefe, #f4f4f4);
}
.sheet td {
  height: 68px;
  padding: 0 8px;
  overflow: hidden;
  border: solid #d3d3d3;
  border-width: 0 2px 2px 0;
  white-space: nowrap;
}
.sheet td:last-child { border-right: 0; }
.sheet .short td { height: 62px; }
.sheet .short th { padding-bottom: 8px; vertical-align: bottom; }
.sheet .box { border-color: #000; box-shadow: -2px -2px #000, 0 -2px #000; }
.sheet .mid { font-weight: 700; text-align: center; }
.sheet .total { font-weight: 700; }
.sheet .num { text-align: right; }
.sheet .hl { background: #ffff55; }
```
